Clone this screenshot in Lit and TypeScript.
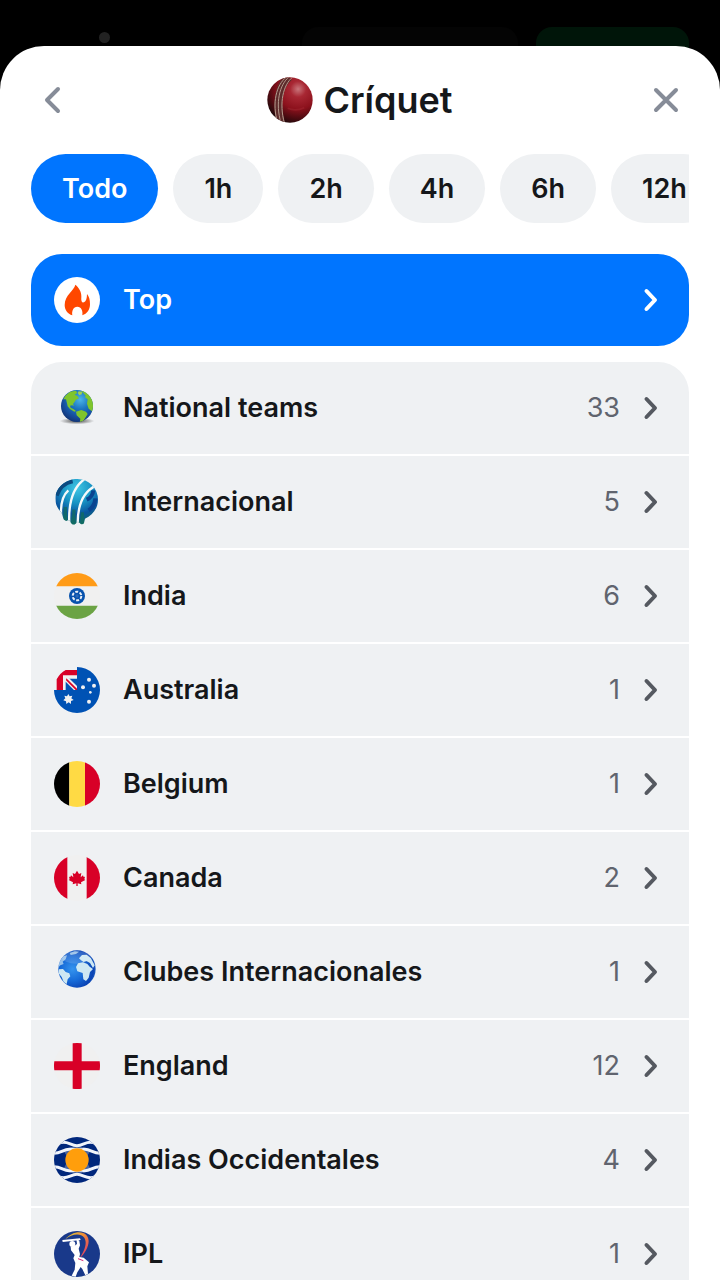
import { LitElement, html, css, svg, SVGTemplateResult } from 'lit';
import { customElement, property, state } from 'lit/decorators.js';

interface League {
  name: string;
  icon: string;
  count: number;
}

const PERIODS = ['Todo', '1h', '2h', '4h', '6h', '12h'];

const LEAGUES: League[] = [
  { name: 'National teams', icon: 'earth', count: 33 },
  { name: 'Internacional', icon: 'icc', count: 5 },
  { name: 'India', icon: 'india', count: 6 },
  { name: 'Australia', icon: 'australia', count: 1 },
  { name: 'Belgium', icon: 'belgium', count: 1 },
  { name: 'Canada', icon: 'canada', count: 2 },
  { name: 'Clubes Internacionales', icon: 'globe', count: 1 },
  { name: 'England', icon: 'england', count: 12 },
  { name: 'Indias Occidentales', icon: 'windies', count: 4 },
  { name: 'IPL', icon: 'ipl', count: 1 },
];

// All league icons share a 138x138 box
const ICONS: Record<string, SVGTemplateResult> = {
  ball: svg`
    <defs>
      <radialGradient id="g" cx="0.68" cy="0.26" r="0.8">
        <stop offset="0" stop-color="#c9757b" />
        <stop offset="0.22" stop-color="#a82733" />
        <stop offset="0.55" stop-color="#8c111c" />
        <stop offset="0.82" stop-color="#4a0a10" />
        <stop offset="1" stop-color="#1c0a0b" />
      </radialGradient>
      <clipPath id="c"><circle cx="69" cy="69" r="68" /></clipPath>
    </defs>
    <circle cx="69" cy="69" r="68" fill="url(#g)" />
    <g clip-path="url(#c)" fill="none">
      <path d="M66 0C38 22 24 78 42 138" stroke="#5d2b2b" stroke-width="24" />
      <path d="M58 0C28 24 14 78 32 138M66 0C38 22 24 78 42 138M77 0C48 24 36 78 52 138" stroke="#b59a8d" stroke-width="3" />
      <path d="M62 94Q86 104 112 92" stroke="#b33943" stroke-width="5" opacity="0.3" />
    </g>`,
  fire: svg`
    <circle cx="69" cy="69" r="69" fill="#fff" />
    <path fill="#ff4700" d="M64 23C60 41 32 54 32 84C32 99 41 111 55 115C53 102 58 89 70 89C82 89 87 102 85 115C99 111 108 98 108 82C108 68 105 58 99 51C99 64 96 73 90 76C83 78 81 71 82 59C83 44 74 31 64 23Z" />`,
  earth: svg`
    <defs>
      <radialGradient id="g" cx="0.6" cy="0.3" r="0.75">
        <stop offset="0" stop-color="#4cb5e8" />
        <stop offset="0.4" stop-color="#1b76c0" />
        <stop offset="0.75" stop-color="#164c9b" />
        <stop offset="1" stop-color="#12316f" />
      </radialGradient>
      <radialGradient id="s">
        <stop offset="0" stop-color="#333" stop-opacity="0.9" />
        <stop offset="1" stop-color="#333" stop-opacity="0" />
      </radialGradient>
      <clipPath id="c"><circle cx="69" cy="63" r="48" /></clipPath>
    </defs>
    <ellipse cx="69" cy="108" rx="52" ry="10" fill="url(#s)" />
    <circle cx="69" cy="63" r="48" fill="url(#g)" />
    <g clip-path="url(#c)" fill="#7fc52c">
      <path d="M34 32L48 20L66 17L70 24L62 29L70 33L75 40L66 44L61 52L57 57L60 62L54 61L48 62L50 68L58 72L66 78L61 80L48 72L41 64L38 51L36 43L28 43Z" />
      <path d="M66 80L82 75L96 80L101 87L94 98L86 110L77 115L79 101L68 91Z" />
      <path d="M82 17L94 18L110 34L118 52L116 80L104 71L99 56L101 43L93 37L95 32Z" />
      <path d="M74 19L85 20L83 28L76 31L71 24Z" fill="#9ccf55" />
    </g>`,
  icc: svg`
    <defs>
      <radialGradient id="g" cx="0.5" cy="0.2" r="0.8">
        <stop offset="0" stop-color="#3fc6e4" />
        <stop offset="0.4" stop-color="#1894c4" />
        <stop offset="0.7" stop-color="#0a559f" />
        <stop offset="1" stop-color="#12705f" />
      </radialGradient>
      <clipPath id="c">
        <path d="M70 0A62 62 0 0 1 132 62C132 88 116 108 93 119L90 132Q84 140 77 132L71 128L65 134Q57 140 51 132L46 124L42 124Q35 128 29 121L22 100Q4 84 4 58C6 24 35 0 70 0Z" />
      </clipPath>
    </defs>
    <g clip-path="url(#c)" fill="none">
      <path d="M0 0H138V138H0Z" fill="url(#g)" />
      <path d="M8 50Q20 14 56 7" stroke="#0b4a80" stroke-width="12" />
      <path d="M98 62Q116 54 118 34M104 94Q122 82 124 58" stroke="#0a4490" stroke-width="12" />
      <path d="M34 84V128M60 92L58 138M85 100V138" stroke="#126b62" stroke-width="10" opacity="0.8" />
      <g stroke="#f4f9fa" stroke-width="7">
        <path d="M43 34C24 51 18 76 22 118" />
        <path d="M92 0C58 24 42 66 46 138" />
        <path d="M126 20C92 36 70 72 71 138" />
      </g>
    </g>`,
  india: svg`
    <defs><clipPath id="c"><circle cx="69" cy="69" r="69" /></clipPath></defs>
    <g clip-path="url(#c)">
      <path fill="#f0f0f0" d="M0 0H138V138H0Z" />
      <path fill="#ff9b17" d="M0 0H138V40H0Z" />
      <path fill="#6ba344" d="M0 98H138V138H0Z" />
    </g>
    <circle cx="69" cy="69" r="24" fill="#0752ad" />
    <circle cx="69" cy="69" r="13" fill="none" stroke="#e8eef6" stroke-width="6" stroke-dasharray="9 4.6" />
    <circle cx="69" cy="69" r="5" fill="#2b68b6" />`,
  australia: svg`
    <path fill="#0052b4" d="M69 0A69 69 0 1 1 0 69H69Z" />
    <path fill="#f0f0f0" d="M8 69V37L35 9H69V69Z" />
    <path fill="#d80027" d="M8 69V37Q18 18 35 9H69V25H27V69Z" />
    <path fill="#0052b4" d="M44 35H69V59ZM35 43L61 69H35Z" />
    <path fill="#f0f0f0" d="M34 32H44L69 57V69H60L34 43Z" />
    <path fill="#d80027" d="M37 34L69 65V69H65L36 40Z" />
    <path fill="#f0f0f0" d="M43 81L47 88L55 86L52 94L59 99L51 102L51 111L44 106L37 111L36 103L28 100L34 94L31 86L39 88Z" />
    <g fill="#f0f0f0">
      <circle cx="105" cy="38" r="6" />
      <circle cx="87" cy="61" r="6" />
      <circle cx="120" cy="56" r="6" />
      <circle cx="105" cy="104" r="6" />
      <circle cx="109" cy="76" r="4" />
    </g>`,
  belgium: svg`
    <defs><clipPath id="c"><circle cx="69" cy="69" r="69" /></clipPath></defs>
    <g clip-path="url(#c)">
      <path d="M0 0H46V138H0Z" />
      <path fill="#ffda44" d="M46 0H93V138H46Z" />
      <path fill="#d80027" d="M93 0H138V138H93Z" />
    </g>`,
  canada: svg`
    <defs><clipPath id="c"><circle cx="69" cy="69" r="69" /></clipPath></defs>
    <g clip-path="url(#c)">
      <path fill="#f0f0f0" d="M0 0H138V138H0Z" />
      <path fill="#d80027" d="M0 0H40V138H0ZM98 0H138V138H98Z" />
    </g>
    <path fill="#d80027" d="M69 47L75 57L82 54L80 67L87 61L89 66L93 65L91 73L94 75L81 82L82 88L71 85V93H67V85L56 88L57 82L44 75L47 73L45 65L49 66L51 61L58 67L56 54L63 57Z" />`,
  globe: svg`
    <defs>
      <radialGradient id="g" cx="0.38" cy="0.5" r="0.7">
        <stop offset="0" stop-color="#3594ee" />
        <stop offset="0.45" stop-color="#176bd8" />
        <stop offset="0.8" stop-color="#0b43b3" />
        <stop offset="1" stop-color="#3984d7" />
      </radialGradient>
      <clipPath id="c"><circle cx="69" cy="60" r="56" /></clipPath>
    </defs>
    <circle cx="69" cy="60" r="56" fill="url(#g)" />
    <g clip-path="url(#c)" fill="#cde8f3">
      <path d="M15 61L27 60L35 69L46 73L49 82L41 91L38 105L29 99L23 84L14 73Z" />
      <path d="M72 43L87 40L100 45L107 53L117 60L108 69L104 86L96 96L88 91L86 72L70 67L66 54Z" />
      <path d="M75 28L84 18L98 17L111 28L122 49L117 57L108 42L97 36L89 39L81 34Z" />
      <path d="M15 39L28 22L39 19L35 31L26 38L29 45L19 49L12 56Z" opacity="0.7" />
      <path d="M47 12L62 7L75 8L66 15L50 18Z" opacity="0.7" />
    </g>
    <ellipse cx="67" cy="25" rx="43" ry="19" fill="#fff" opacity="0.14" />`,
  england: svg`
    <circle cx="69" cy="69" r="69" fill="#f0f0f0" />
    <path fill="#d80027" d="M56 1Q69 -1 83 1V55H137Q139 69 137 82H83V137Q69 139 56 137V82H1Q-1 69 1 55H56Z" />`,
  windies: svg`
    <defs><clipPath id="c"><circle cx="69" cy="69" r="69" /></clipPath></defs>
    <g clip-path="url(#c)">
      <path fill="#00277c" d="M0 0H138V138H0Z" />
      <g fill="none" stroke="#f0f4fb" stroke-width="9">
        <path d="M14 19C38 8 49 26 69 26S100 8 124 19" />
        <path d="M0 49C22 49 30 35 48 37S90 39 90 37C108 35 116 49 138 49" />
        <path d="M0 89C22 89 30 103 48 101S90 99 90 101C108 103 116 89 138 89" />
        <path d="M14 119C38 130 49 112 69 112S100 130 124 119" />
      </g>
      <path fill="#f0f4fb" d="M28 42Q50 64 28 96Q69 124 110 96Q88 64 110 42Q69 14 28 42Z" opacity="0.3" />
    </g>
    <circle cx="69" cy="69" r="35" fill="#ff9e0c" />`,
  ipl: svg`
    <defs>
      <linearGradient id="g" x1="0" y1="0" x2="1" y2="1">
        <stop offset="0" stop-color="#d7d13c" />
        <stop offset="0.45" stop-color="#f18b35" />
        <stop offset="1" stop-color="#d52475" />
      </linearGradient>
    </defs>
    <circle cx="69" cy="69" r="69" fill="#19398a" />
    <path fill="url(#g)" d="M34 25C49 4 83 -4 97 12C114 31 97 64 76 84C88 64 102 39 91 20C79 5 52 9 34 25Z" />
    <path fill="#fff" d="M25 27L78 22L80 27L26 33Z" />
    <circle cx="55" cy="39" r="9" fill="#fff" />
    <path fill="#fff" d="M67 23L76 29L78 43L74 53L78 69L76 78L89 80L105 94L100 106L102 128L94 133L85 114L80 108L70 124L65 137L53 134L62 116L64 96L58 82L62 72L51 58L50 47L62 44L69 39Z" />
    <path d="M72 83L88 89" stroke="#d52475" stroke-width="3" />`,
};

@customElement('league-icon')
export class LeagueIcon extends LitElement {
  @property({ type: String }) name = '';

  static styles = css`
    :host {
      display: block;
      flex: none;
      width: 46px;
      height: 46px;
    }
    .icon {
      display: block;
      width: 100%;
      height: 100%;
    }
  `;

  render() {
    return html`<svg class="icon" viewBox="0 0 138 138" aria-hidden="true">${ICONS[this.name]}</svg>`;
  }
}

@customElement('league-row')
export class LeagueRow extends LitElement {
  @property({ type: String }) label = '';
  @property({ type: String }) icon = '';
  @property({ type: Number }) count?: number;
  @property({ type: Boolean, reflect: true }) highlighted = false;

  static styles = css`
    :host {
      display: block;
    }
    .row {
      display: flex;
      align-items: center;
      gap: 23px;
      width: 100%;
      height: 92px;
      padding: 0 30px 0 23px;
      border: 0;
      background: #eff1f3;
      color: #15171a;
      font: 600 27px/36px Inter, sans-serif;
      text-align: left;
      cursor: pointer;
      box-sizing: border-box;
    }
    :host([highlighted]) .row {
      border-radius: 31px;
      background: #0075ff;
      color: #fff;
    }
    .label {
      flex: 1;
    }
    .count {
      color: #60646e;
      font-weight: 400;
    }
    .chevron {
      flex: none;
      width: 16px;
      height: 24px;
      color: #555960;
    }
    :host([highlighted]) .chevron {
      color: #fff;
    }
  `;

  render() {
    return html`
      <button class="row" type="button">
        <league-icon name=${this.icon}></league-icon>
        <span class="label">${this.label}</span>
        ${this.count === undefined ? '' : html`<span class="count">${this.count}</span>`}
        <svg class="chevron" viewBox="0 0 16 24" aria-hidden="true">
          <path d="M3.5 3L12 12L3.5 21" fill="none" stroke="currentColor" stroke-width="4" stroke-linecap="round" stroke-linejoin="round" />
        </svg>
      </button>
    `;
  }
}

@customElement('app-root')
export class AppRoot extends LitElement {
  @state() private period = 'Todo';

  static styles = css`
    :host {
      display: flex;
      flex-direction: column;
      height: 100vh;
      overflow: hidden;
      background: #000;
      color: #15171a;
      font-family: Inter, sans-serif;
    }
    .backdrop {
      display: flex;
      flex: none;
      align-items: flex-start;
      gap: 18px;
      height: 46px;
      padding: 27px 31px 0 99px;
      box-sizing: border-box;
    }
    .dot {
      width: 11px;
      height: 11px;
      margin: 5px auto 0 0;
      border-radius: 50%;
      background: #222;
    }
    .ghost {
      width: 216px;
      height: 46px;
      border-radius: 16px;
      background: #040404;
    }
    .ghost.green {
      width: 153px;
      background: #001509;
    }
    .sheet {
      position: relative;
      display: flex;
      flex: 1;
      flex-direction: column;
      min-height: 0;
      padding: 0 31px;
      border-radius: 44px 44px 0 0;
      background: #fff;
    }
    .header {
      display: flex;
      flex: none;
      align-items: center;
      justify-content: space-between;
      height: 108px;
    }
    .title {
      display: flex;
      align-items: center;
      gap: 10px;
      margin: 0;
      font-size: 36px;
      font-weight: 600;
      line-height: 46px;
    }
    .icon-button {
      width: 46px;
      height: 46px;
      padding: 0;
      border: 0;
      background: none;
      color: #868c98;
      cursor: pointer;
    }
    .icon-button svg {
      display: block;
    }
    .periods {
      display: flex;
      flex: none;
      gap: 15px;
      overflow: hidden;
    }
    .period {
      flex: none;
      height: 69px;
      padding: 0 31px;
      border: 0;
      border-radius: 35px;
      background: #eff1f3;
      color: #15171a;
      font: 600 27px/36px Inter, sans-serif;
      cursor: pointer;
    }
    .period.active {
      background: #0075ff;
      color: #fff;
    }
    .content {
      display: flex;
      flex: 1;
      flex-direction: column;
      gap: 16px;
      min-height: 0;
      margin-top: 31px;
      overflow-y: auto;
      scrollbar-width: none;
    }
    .leagues {
      display: flex;
      flex: none;
      flex-direction: column;
      gap: 2px;
      margin: 0;
      padding: 0;
      border-radius: 31px 31px 0 0;
      overflow: hidden;
      list-style: none;
    }
  `;

  render() {
    return html`
      <div class="backdrop">
        <div class="dot"></div>
        <div class="ghost"></div>
        <div class="ghost green"></div>
      </div>
      <main class="sheet">
        <header class="header">
          <button class="icon-button" type="button" aria-label="Atrás">
            <svg viewBox="0 0 46 46" fill="none" stroke="currentColor" stroke-width="4" stroke-linecap="round" stroke-linejoin="round">
              <path d="M27 12L16 23L27 34" />
            </svg>
          </button>
          <h1 class="title"><league-icon name="ball"></league-icon>Críquet</h1>
          <button class="icon-button" type="button" aria-label="Cerrar">
            <svg viewBox="0 0 46 46" fill="none" stroke="currentColor" stroke-width="4" stroke-linecap="round">
              <path d="M13 13L33 33M33 13L13 33" />
            </svg>
          </button>
        </header>
        <nav class="periods">
          ${PERIODS.map(
            (p) => html`
              <button
                class="period ${p === this.period ? 'active' : ''}"
                type="button"
                aria-pressed=${p === this.period}
                @click=${() => (this.period = p)}
              >${p}</button>
            `
          )}
        </nav>
        <div class="content">
          <league-row label="Top" icon="fire" highlighted></league-row>
          <ul class="leagues">
            ${LEAGUES.map(
              (l) => html`<li><league-row label=${l.name} icon=${l.icon} .count=${l.count}></league-row></li>`
            )}
          </ul>
        </div>
      </main>
    `;
  }
}
